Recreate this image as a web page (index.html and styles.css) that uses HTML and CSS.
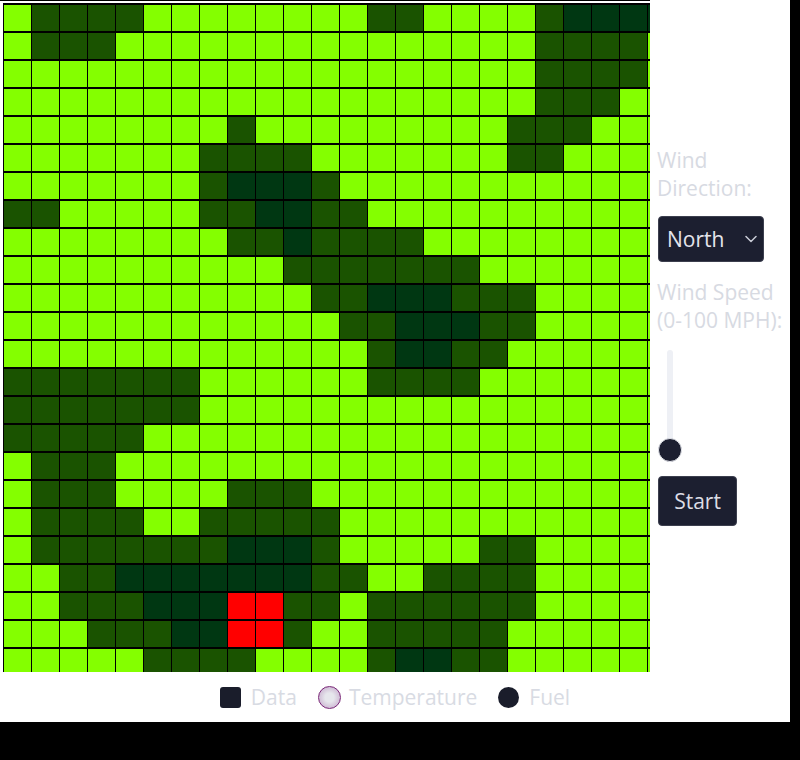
FILE: index.html
```html
<!DOCTYPE html>
<html lang="en">
<head>
<meta charset="utf-8">
<title>Fire Simulation</title>
<link rel="stylesheet" href="styles.css">
</head>
<body>
<div class="app">
  <div class="main">
    <div class="viewport">
      <div class="board" id="board"
        data-rows="LDDDDLLLLLLLLDDLLLLDXXXX,LDDDLLLLLLLLLLLLLLLDDDDL,LLLLLLLLLLLLLLLLLLLDDDDL,LLLLLLLLLLLLLLLLLLLDDDLL,LLLLLLLLDLLLLLLLLLDDDLLL,LLLLLLLDDDDLLLLLLLDDLLLL,LLLLLLLDXXXDLLLLLLLLLLLL,DDLLLLLDDXXDDLLLLLLLLLLL,LLLLLLLLDDXDDDDLLLLLLLLL,LLLLLLLLLLDDDDDDDLLLLLLL,LLLLLLLLLLLDDXXXDDDLLLLL,LLLLLLLLLLLLDDXXXDDLLLLL,LLLLLLLLLLLLLDXXDDLLLLLL,DDDDDDDLLLLLLDDDDLLLLLLL,DDDDDDDLLLLLLLLLLLLLLLLL,DDDDDLLLLLLLLLLLLLLLLLLL,LDDDLLLLLLLLLLLLLLLLLLLL,LDDDLLLLDDDLLLLLLLLLLLLL,LDDDDLLDDDDDLLLLLLLLLLLL,LDDDDDDDXXXDLLLLLDDLLLLL,LLDDXXXXXXXDDLLDDDDLLLLL,LLDDDXXXRRDDLDDDDDDLLLLL,LLLDDDXXRRDLLDDDDDLLLLLL,LLLLLDDDDLLLLDXXDDLLLLLL"></div>
    </div>
    <div class="controls">
      <div class="label">Wind<br>Direction:</div>
      <div class="select">
        <span>North</span>
        <svg class="chevron" width="12" height="8" viewBox="0 0 12 8"><path d="M1 1.5 L6 6.5 L11 1.5" fill="none" stroke="#c9ccd6" stroke-width="1.5" stroke-linecap="round" stroke-linejoin="round"/></svg>
      </div>
      <div class="label label-speed">Wind Speed<br>(0-100 MPH):</div>
      <div class="slider">
        <div class="track"></div>
        <div class="thumb"></div>
      </div>
      <button class="btn">Start</button>
    </div>
  </div>
  <div class="legend">
    <div class="item"><span class="icon square"></span><span class="text">Data</span></div>
    <div class="item"><span class="icon temp"></span><span class="text">Temperature</span></div>
    <div class="item"><span class="icon dot"></span><span class="text">Fuel</span></div>
  </div>
</div>
<script src="script.js"></script>
</body>
</html>
```

FILE: styles.css
```css
html, body {
  margin: 0;
  padding: 0;
}
body {
  background: #000;
  font-family: "Open Sans", "Noto Sans", sans-serif;
}
.app {
  width: 790px;
  height: 722px;
  background: #fff;
  display: flex;
  flex-direction: column;
}
.main {
  display: flex;
  align-items: center;
  height: 672px;
}
.viewport {
  flex: none;
  width: 650px;
  height: 672px;
  overflow: hidden;
  border-top: 1px solid #000;
  padding: 2px 0 0 3px;
  box-sizing: border-box;
}
.board {
  display: grid;
  grid-template-columns: repeat(24, 27px);
  grid-auto-rows: 26px;
  column-gap: 1px;
  row-gap: 2px;
  padding: 2px 1px 2px 1px;
  background: #000;
  width: max-content;
}
.cell { background: #84ff00; }
.cell.d { background: #1a5300; }
.cell.x { background: #003712; }
.cell.r { background: #ff0000; }

.controls {
  margin-left: 7px;
  display: flex;
  flex-direction: column;
  align-items: flex-start;
  width: 133px;
}
.label {
  font-size: 21px;
  line-height: 28px;
  color: #d7dae2;
  white-space: nowrap;
}
.select {
  margin: 14px 0 0 1px;
  width: 106px;
  height: 46px;
  box-sizing: border-box;
  background: #1c1f30;
  border: 1px solid #3c3f4e;
  border-radius: 4px;
  color: #e4e5ec;
  font-size: 21px;
  display: flex;
  align-items: center;
  justify-content: space-between;
  padding: 0 6px 0 8px;
}
.chevron { display: block; }
.label-speed { margin-top: 16px; }
.slider {
  margin-top: 16px;
  margin-left: 1px;
  width: 24px;
  display: flex;
  flex-direction: column;
  align-items: center;
}
.track {
  width: 6px;
  height: 100px;
  border-radius: 3px;
  background: #eef0f5;
}
.thumb {
  width: 24px;
  height: 24px;
  margin-top: -12px;
  box-sizing: border-box;
  border-radius: 50%;
  background: #1c1f30;
  border: 1px solid #e4e6ec;
}
.btn {
  margin: 14px 0 0 1px;
  width: 79px;
  height: 50px;
  box-sizing: border-box;
  background: #1c1f30;
  border: 1px solid #3c3f4e;
  border-radius: 4px;
  color: #dcdde5;
  font-family: inherit;
  font-size: 21px;
  padding: 0;
}
.legend {
  flex: 1;
  display: flex;
  justify-content: center;
  align-items: center;
  gap: 21px;
}
.item {
  display: flex;
  align-items: center;
  gap: 10px;
}
.text {
  font-size: 21px;
  line-height: 28px;
  color: #d8dbe3;
}
.icon { display: block; flex: none; }
.square {
  width: 21px;
  height: 21px;
  border-radius: 3px;
  background: #1a1d2b;
}
.temp {
  width: 23px;
  height: 23px;
  box-sizing: border-box;
  border-radius: 50%;
  border: 1.5px solid #7a2877;
  background: radial-gradient(circle, #e6e6ec 0 30%, #d6c8dc 60%, #c3a3cb 100%);
  margin-right: -2px;
}
.dot {
  width: 21px;
  height: 21px;
  border-radius: 50%;
  background: #1a1d2b;
}
```

FILE: script.js
```js
(function () {
  var board = document.getElementById('board');
  var rows = board.getAttribute('data-rows').split(',');
  var map = { L: 'cell', D: 'cell d', X: 'cell x', R: 'cell r' };
  rows.forEach(function (row) {
    for (var i = 0; i < row.length; i++) {
      var c = document.createElement('div');
      c.className = map[row[i]];
      board.appendChild(c);
    }
  });
})();
```
